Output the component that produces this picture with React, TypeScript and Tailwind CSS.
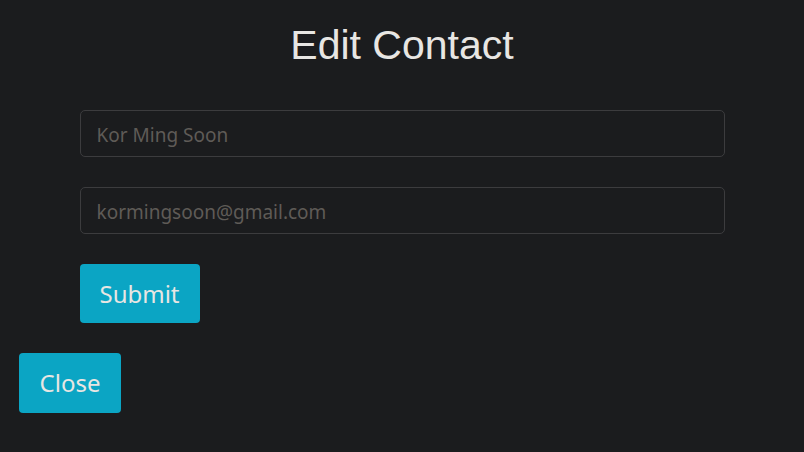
import React from "react";

export default function App() {
  return (
    <div className="w-[804px] h-[452px] bg-[#1b1c1e] overflow-hidden px-[19px]" style={{ fontFamily: '"Segoe UI", "Noto Sans", sans-serif' }}>
      <h1 className="text-center text-[41px] leading-[48px] pt-[21px] text-[#e8e6e3]" style={{ fontFamily: '"Liberation Sans", Arial, sans-serif' }}>
        Edit Contact
      </h1>
      <div className="w-[645px] mx-auto mt-[41px] flex flex-col gap-[30px]">
        <input
          className="h-[47px] w-full rounded-[5px] border border-[#3c3c3e] bg-transparent px-[16px] pt-[2px] text-[19px] text-[#e8e6e3] placeholder:text-[#5f5b57] outline-none"
          placeholder="Kor Ming Soon"
        />
        <input
          className="h-[47px] w-full rounded-[5px] border border-[#3c3c3e] bg-transparent px-[16px] pt-[2px] text-[19px] text-[#e8e6e3] placeholder:text-[#5f5b57] outline-none"
          placeholder="kormingsoon@gmail.com"
        />
        <div>
          <button className="h-[59px] w-[120px] rounded-[4px] bg-[#0ba5c4] text-[24px] text-[#e8e6e3]">Submit</button>
        </div>
      </div>
      <div className="mt-[30px]">
        <button className="h-[60px] w-[102px] rounded-[4px] bg-[#0ba5c4] text-[24px] text-[#e8e6e3]">Close</button>
      </div>
    </div>
  );
}
